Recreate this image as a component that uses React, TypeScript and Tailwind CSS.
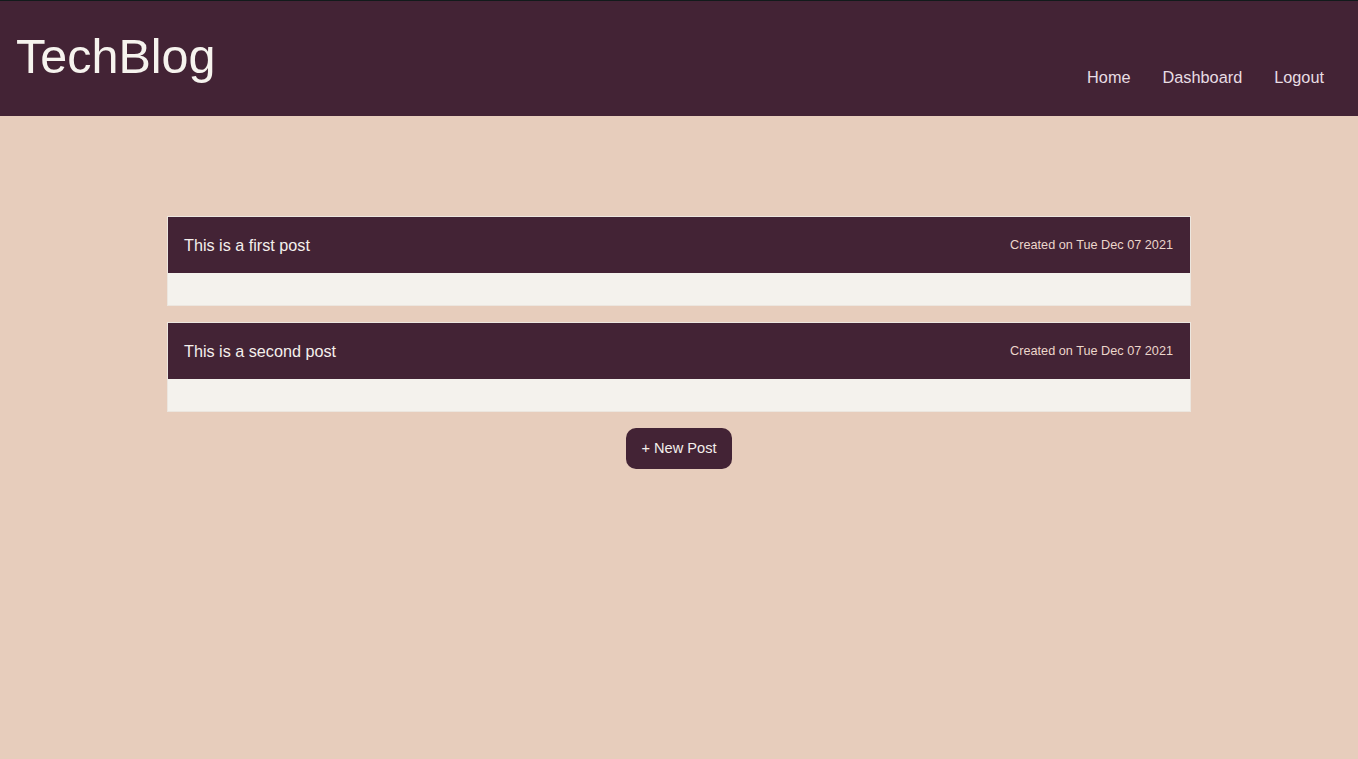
const posts = [
  { id: 1, title: "This is a first post", date: "Tue Dec 07 2021" },
  { id: 2, title: "This is a second post", date: "Tue Dec 07 2021" },
];

function Header() {
  return (
    <header className="h-[116px] bg-[#432335] border-t border-[#121a1b] flex justify-between px-4">
      <h1 className="text-[48.5px] leading-[54px] pt-[28px] text-[#f6f3ee]">TechBlog</h1>
      <nav className="flex gap-8 self-end pb-[27px] pr-[18px] text-[16.3px] leading-6 text-[#e8dde4]">
        <a href="#">Home</a>
        <a href="#">Dashboard</a>
        <a href="#">Logout</a>
      </nav>
    </header>
  );
}

function PostCard({ title, date }: { title: string; date: string }) {
  return (
    <div className="border border-[#ece6df] bg-[#f4f2ed]">
      <div className="h-14 bg-[#432335] flex items-center justify-between pl-4 pr-[17px]">
        <span className="text-[16.2px] leading-6 text-[#f4efec]">{title}</span>
        <span className="text-[12.7px] pt-px text-[#ecd6cb]">Created on {date}</span>
      </div>
      <div className="h-8"></div>
    </div>
  );
}

export default function App() {
  return (
    <div
      className="min-h-[759px] bg-[#e7cdbc]"
      style={{ fontFamily: '"Liberation Sans", Arial, sans-serif' }}
    >
      <Header />
      <main className="w-[1024px] mx-auto pt-[100px] flex flex-col gap-4">
        {posts.map((p) => (
          <PostCard key={p.id} title={p.title} date={p.date} />
        ))}
        <div className="flex justify-center">
          <button className="h-[41px] px-[15px] rounded-[10px] bg-[#432335] text-[14.6px] text-[#f4efec]">
            + New Post
          </button>
        </div>
      </main>
    </div>
  );
}
